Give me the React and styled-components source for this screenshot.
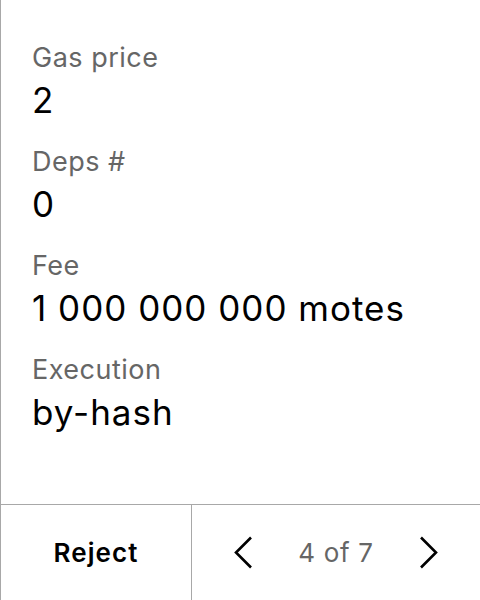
import React from "react";
import styled, { createGlobalStyle } from "styled-components";

const Global = createGlobalStyle`
  html, body { margin: 0; padding: 0; background: #fff; }
  body { font-family: Inter, "Noto Sans", sans-serif; }
  * { box-sizing: border-box; }
`;

const Screen = styled.div`
  width: 480px;
  height: 600px;
  display: flex;
  flex-direction: column;
  border-left: 1px solid #a8a8a8;
  background: #fff;
`;

const Details = styled.div`
  flex: 1;
  display: flex;
  flex-direction: column;
  gap: 24px;
  padding: 40px 0 0 31px;
`;

const Field = styled.div`
  display: flex;
  flex-direction: column;
  gap: 4px;
`;

const Label = styled.div`
  font-size: 27px;
  line-height: 36px;
  letter-spacing: 0.5px;
  color: #666;
`;

const Value = styled.div`
  font-size: 35px;
  line-height: 40px;
  letter-spacing: 1px;
  color: #000;
`;

const Footer = styled.div`
  height: 96px;
  display: grid;
  grid-template-columns: 191px 1fr;
  border-top: 1px solid #a8a8a8;
`;

const RejectButton = styled.button`
  border: none;
  border-right: 1px solid #a8a8a8;
  background: transparent;
  font-family: inherit;
  font-size: 26px;
  font-weight: 600;
  letter-spacing: 1.1px;
  color: #000;
  padding: 0;
`;

const Pager = styled.div`
  display: flex;
  align-items: center;
  justify-content: center;
  gap: 46px;
`;

const Arrow = styled.button`
  border: none;
  background: transparent;
  padding: 0;
  display: flex;
`;

const Count = styled.span`
  font-size: 26px;
  letter-spacing: 0.7px;
  color: #666;
`;

const Chevron = ({ dir }) => (
  <svg width="18" height="33" viewBox="0 0 18 33">
    <polyline
      points={dir === "left" ? "17,1.5 2,16.5 17,31.5" : "1,1.5 16,16.5 1,31.5"}
      fill="none"
      stroke="#000"
      strokeWidth="2.6"
    />
  </svg>
);

const fields = [
  ["Gas price", "2"],
  ["Deps #", "0"],
  ["Fee", "1 000 000 000 motes"],
  ["Execution", "by-hash"],
];

export default function App() {
  return (
    <>
      <Global />
      <Screen>
        <Details>
          {fields.map(([l, v]) => (
            <Field key={l}>
              <Label>{l}</Label>
              <Value>{v}</Value>
            </Field>
          ))}
        </Details>
        <Footer>
          <RejectButton>Reject</RejectButton>
          <Pager>
            <Arrow><Chevron dir="left" /></Arrow>
            <Count>4 of 7</Count>
            <Arrow><Chevron dir="right" /></Arrow>
          </Pager>
        </Footer>
      </Screen>
    </>
  );
}
